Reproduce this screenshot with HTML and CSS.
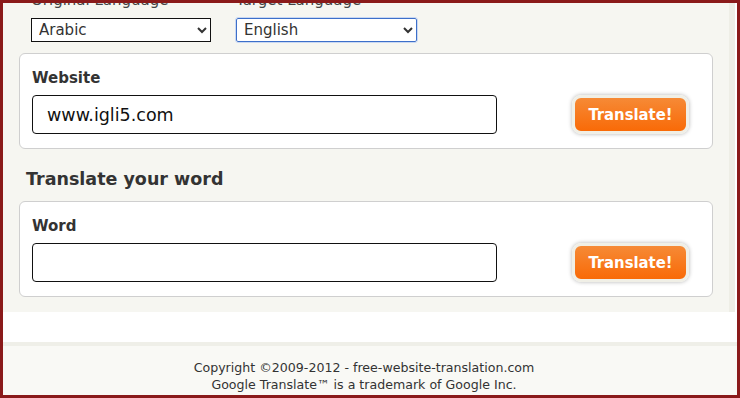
FILE: index.html
```html
<!DOCTYPE html>
<html lang="en">
<head>
  <meta charset="UTF-8">
  <meta name="viewport" content="width=device-width, initial-scale=1.0">
  <title>Free Website Translation</title>
  <link rel="stylesheet" href="styles.css">
</head>
<body>

  <div class="frame">
    <div class="panel">
      <div class="langs">
        <div class="lang">
          <label for="from">Original Language</label>
          <select id="from" class="sel">
            <option>Arabic</option>
          </select>
        </div>
        <div class="lang">
          <label for="to">Target Language</label>
          <select id="to" class="sel sel-focus">
            <option>English</option>
          </select>
        </div>
      </div>

      <div class="card">
        <div class="card-label">Website</div>
        <div class="card-row">
          <input class="field" type="text" value="www.igli5.com">
          <button class="btn">Translate!</button>
        </div>
      </div>

      <h2 class="heading">Translate your word</h2>

      <div class="card">
        <div class="card-label">Word</div>
        <div class="card-row">
          <input class="field" type="text" value="">
          <button class="btn">Translate!</button>
        </div>
      </div>
    </div>

    <div class="footer">
      <p>Copyright ©2009-2012 - free-website-translation.com</p>
      <p>Google Translate™ is a trademark of Google Inc.</p>
    </div>
  </div>

</body>
</html>
```

FILE: styles.css
```css
body { margin: 0; padding: 0; font-family: "DejaVu Sans", Verdana, sans-serif; color: #333; }
.frame { width: 740px; height: 398px; box-sizing: border-box; border: 3px solid #8a1a1a; background: #fff; overflow: hidden; }
.panel { width: 732px; margin-top: -12px; height: 321px; box-sizing: border-box; padding: 0 16px; background: #f6f6f1; border-right: 6px solid #eeeee6; }
.langs { display: flex; gap: 25px; padding-left: 12px; }
.lang { display: flex; flex-direction: column; }
.lang label { font-size: 15px; line-height: 18px; color: #444; margin-bottom: 9px; }
.sel { width: 180px; height: 24px; font-family: "DejaVu Sans", Verdana, sans-serif; font-size: 15px; color: #333; background: #fff; border: 1px solid #111; border-radius: 0; padding: 0 3px; }
.sel-focus { width: 181px; border: 1px solid #3d6fc9; border-radius: 2px; outline: 1px solid #c9d8f2; }
.card { margin-top: 11px; height: 96px; box-sizing: border-box; background: #fff; border: 1px solid #cfcfcf; border-radius: 6px; padding: 15px 23px 0 12px; }
.card-label { font-size: 15px; font-weight: bold; line-height: 18px; color: #333; }
.card-row { display: flex; justify-content: space-between; margin-top: 8px; }
.field { width: 465px; height: 39px; box-sizing: border-box; border: 1px solid #111; border-radius: 4px; padding: 0 14px; font-family: "DejaVu Sans", Verdana, sans-serif; font-size: 17.5px; color: #111; }
.btn { width: 117px; height: 39px; box-sizing: border-box; border: 3px solid #f0efe6; border-radius: 9px; background: linear-gradient(#f68a36, #f96a07); box-shadow: 0 0 4px rgba(0, 0, 0, 0.3); color: #fff; font-family: "DejaVu Sans Condensed", "DejaVu Sans", sans-serif; font-weight: bold; font-size: 16.5px; padding: 0; }
.heading { margin: 19px 0 0 7px; font-size: 17.5px; line-height: 22px; color: #333; }
.heading + .card { margin-top: 11px; }
.footer { margin-top: 30px; border-top: 4px solid #efefe8; background: #f9f9f5; height: 60px; padding: 13px 12px 0 0; text-align: center; font-family: "DejaVu Sans", Verdana, sans-serif; font-size: 12.6px; color: #333; }
.footer p { margin: 0; line-height: 17px; }
```
